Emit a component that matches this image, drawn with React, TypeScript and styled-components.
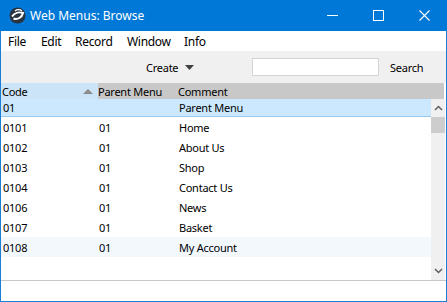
import React from "react";
import styled, { createGlobalStyle } from "styled-components";

const Global = createGlobalStyle`
  html, body { margin: 0; padding: 0; overflow: hidden; background: #fff; }
  * { box-sizing: border-box; }
`;

const FONT = `"Noto Sans", "Liberation Sans", sans-serif`;

const Window = styled.div`
  width: 447px;
  height: 302px;
  display: flex;
  flex-direction: column;
  border: 1px solid #1a7fd4;
  border-top: none;
  font-family: ${FONT};
  font-size: 11px;
  letter-spacing: -0.25px;
  color: #000;
  background: #fff;
`;

const TitleBar = styled.div`
  height: 31px;
  background: #0078d7;
  display: flex;
  align-items: center;
  color: #fff;
  margin: 0 -1px;
  padding-left: 9px;
`;

const TitleText = styled.span`
  margin-left: 4px;
  font-size: 12px;
  letter-spacing: 0;
  flex: 1;
`;

const CaptionButton = styled.div`
  width: 46px;
  height: 31px;
  display: flex;
  align-items: center;
  justify-content: center;
`;

const MenuBar = styled.div`
  height: 20px;
  display: flex;
  align-items: center;
  padding-left: 7px;
  font-size: 12px;
  letter-spacing: -0.3px;
`;

const MenuItem = styled.span<{ $w: number }>`
  width: ${(p) => p.$w}px;
`;

const Toolbar = styled.div`
  height: 32px;
  background: #f0f0f0;
  display: flex;
  align-items: center;
`;

const CreateButton = styled.div`
  margin-left: 145px;
  display: flex;
  align-items: center;
  gap: 7px;
  width: 106px;
`;

const SearchInput = styled.div`
  width: 127px;
  height: 18px;
  background: #fff;
  border: 1px solid #d4d4d4;
`;

const SearchLabel = styled.span`
  margin-left: 11px;
`;

const HeaderRow = styled.div`
  height: 16px;
  display: flex;
  background: #c8c8c8;
  margin-right: 2px;
`;

const HeaderCell = styled.div<{ $w?: number; $active?: boolean }>`
  ${(p) => (p.$w ? `width: ${p.$w}px;` : "flex: 1;")}
  background: ${(p) => (p.$active ? "#cce4f7" : "transparent")};
  display: flex;
  align-items: center;
  padding-left: ${(p) => (p.$active ? 1 : 0)}px;
  position: relative;
`;

const SortArrow = styled.div`
  position: absolute;
  right: 5px;
  top: 6px;
  width: 0;
  height: 0;
  border-left: 5px solid transparent;
  border-right: 5px solid transparent;
  border-bottom: 5px solid #8a8a8a;
`;

const Body = styled.div`
  flex: 1;
  display: flex;
  min-height: 0;
`;

const List = styled.div`
  flex: 1;
  display: flex;
  flex-direction: column;
`;

const Row = styled.div<{ $selected?: boolean; $hover?: boolean }>`
  height: ${(p) => (p.$selected ? 18 : 20)}px;
  display: flex;
  align-items: center;
  background: ${(p) => (p.$selected ? "#cce8ff" : p.$hover ? "#f3f8fd" : "#fff")};
  border-bottom: ${(p) => (p.$selected ? "1px solid #99c9ef" : "none")};
`;

const Cell = styled.div<{ $w?: number; $first?: boolean }>`
  ${(p) => (p.$w ? `width: ${p.$w}px;` : "flex: 1;")}
  padding-left: ${(p) => (p.$first ? 2 : 1)}px;
  white-space: nowrap;
`;

const ScrollBar = styled.div`
  width: 14px;
  margin-right: 1px;
  background: #f0f0f0;
  display: flex;
  flex-direction: column;
  align-items: center;
`;

const ScrollButton = styled.div`
  height: 18px;
  width: 100%;
  display: flex;
  align-items: center;
  justify-content: center;
`;

const Thumb = styled.div`
  width: 100%;
  height: 16px;
  background: #cdcdcd;
`;

const Spacer = styled.div`
  flex: 1;
`;

const Status = styled.div`
  height: 21px;
  border-top: 1px solid #c8c8c8;
`;

const Logo = () => (
  <svg width="17" height="17" viewBox="0 0 17 17">
    <circle cx="8.5" cy="8.5" r="8" fill="#2a3440" />
    <path d="M3 9.5c2.5-3.5 7-5 11-3.5c-1 4.5-5.5 7-9.5 5.5" fill="none" stroke="#fff" strokeWidth="2" />
    <path d="M6 4c2-1.5 5-1.5 7 0" fill="none" stroke="#fff" strokeWidth="1.3" />
  </svg>
);

const rows = [
  ["0101", "01", "Home"],
  ["0102", "01", "About Us"],
  ["0103", "01", "Shop"],
  ["0104", "01", "Contact Us"],
  ["0106", "01", "News"],
  ["0107", "01", "Basket"],
  ["0108", "01", "My Account"],
];

export default function App() {
  return (
    <>
      <Global />
      <Window>
        <TitleBar>
          <Logo />
          <TitleText>Web Menus: Browse</TitleText>
          <CaptionButton>
            <svg width="11" height="11" viewBox="0 0 11 11">
              <line x1="0" y1="5.5" x2="11" y2="5.5" stroke="#fff" strokeWidth="1" />
            </svg>
          </CaptionButton>
          <CaptionButton>
            <svg width="11" height="11" viewBox="0 0 11 11">
              <rect x="0.5" y="0.5" width="10" height="10" fill="none" stroke="#fff" strokeWidth="1" />
            </svg>
          </CaptionButton>
          <CaptionButton>
            <svg width="11" height="11" viewBox="0 0 11 11">
              <path d="M0.5 0.5L10.5 10.5M10.5 0.5L0.5 10.5" stroke="#fff" strokeWidth="1.1" />
            </svg>
          </CaptionButton>
        </TitleBar>
        <MenuBar>
          <MenuItem $w={33}>File</MenuItem>
          <MenuItem $w={34}>Edit</MenuItem>
          <MenuItem $w={52}>Record</MenuItem>
          <MenuItem $w={57}>Window</MenuItem>
          <MenuItem $w={30}>Info</MenuItem>
        </MenuBar>
        <Toolbar>
          <CreateButton>
            Create
            <svg width="9" height="5" viewBox="0 0 9 5">
              <path d="M0 0H9L4.5 5Z" fill="#404040" />
            </svg>
          </CreateButton>
          <SearchInput />
          <SearchLabel>Search</SearchLabel>
        </Toolbar>
        <HeaderRow>
          <HeaderCell $w={97} $active>
            Code
            <SortArrow />
          </HeaderCell>
          <HeaderCell $w={80}>Parent Menu</HeaderCell>
          <HeaderCell>Comment</HeaderCell>
        </HeaderRow>
        <Body>
          <List>
            <Row $selected>
              <Cell $w={97} $first>01</Cell>
              <Cell $w={80}></Cell>
              <Cell>Parent Menu</Cell>
            </Row>
            {rows.map((r, i) => (
              <Row key={r[0]} $hover={i === rows.length - 1}>
                <Cell $w={97} $first>{r[0]}</Cell>
                <Cell $w={80}>{r[1]}</Cell>
                <Cell>{r[2]}</Cell>
              </Row>
            ))}
          </List>
          <ScrollBar>
            <ScrollButton>
              <svg width="9" height="6" viewBox="0 0 9 6">
                <path d="M1 5L4.5 1.5L8 5" fill="none" stroke="#606060" strokeWidth="1.5" />
              </svg>
            </ScrollButton>
            <Thumb />
            <Spacer />
            <ScrollButton>
              <svg width="9" height="6" viewBox="0 0 9 6">
                <path d="M1 1L4.5 4.5L8 1" fill="none" stroke="#606060" strokeWidth="1.5" />
              </svg>
            </ScrollButton>
          </ScrollBar>
        </Body>
        <Status />
      </Window>
    </>
  );
}
